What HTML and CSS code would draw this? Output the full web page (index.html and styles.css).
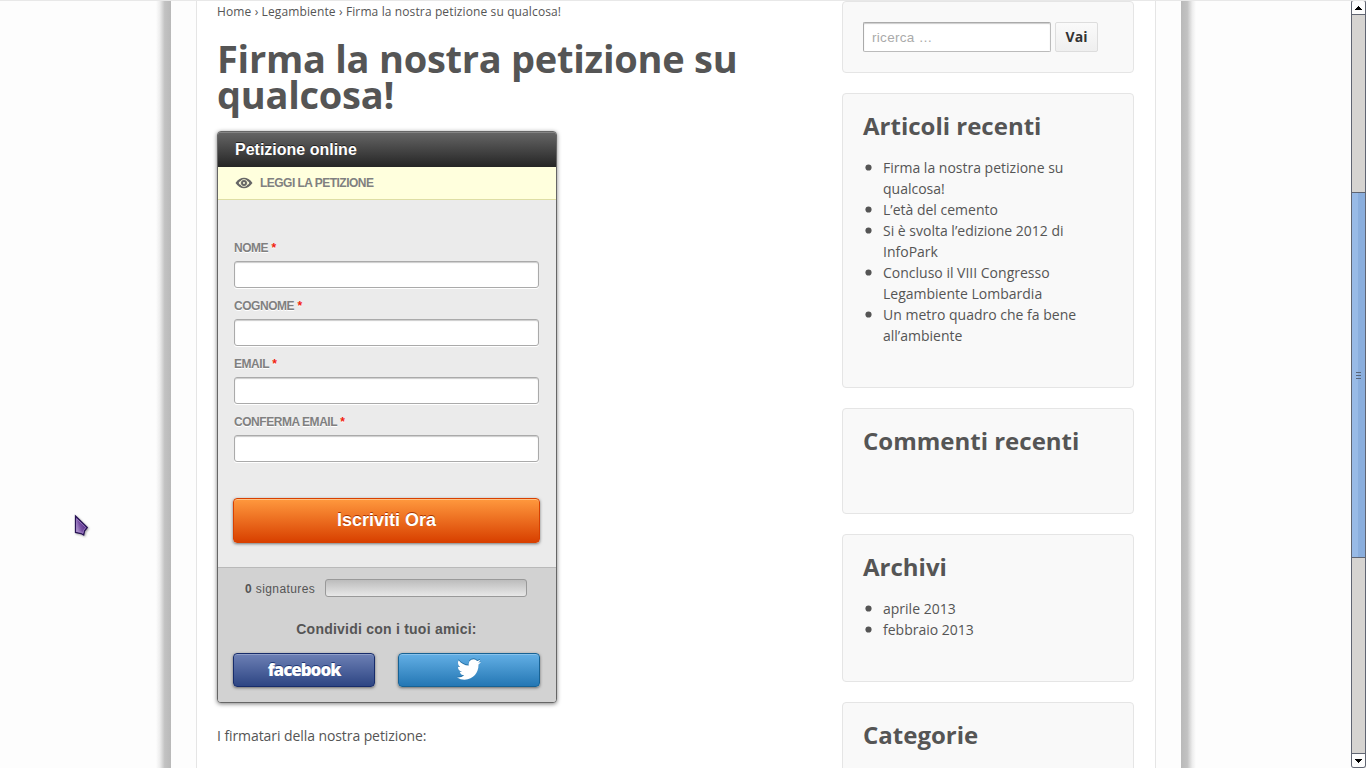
FILE: index.html
```
<!DOCTYPE html>
<html lang="it">
<head>
<meta charset="utf-8">
<title>Firma la nostra petizione su qualcosa!</title>
<link rel="stylesheet" href="styles.css">
</head>
<body>
<div class="viewport">
  <div class="shade shade-left"></div>
  <div class="page">
    <div class="wrapper">
      <main class="content">
        <nav class="breadcrumb">Home › Legambiente › Firma la nostra petizione su qualcosa!</nav>
        <h1 class="title">Firma la nostra petizione su<br>qualcosa!</h1>
        <section class="petition">
          <h2 class="petition-head">Petizione online</h2>
          <div class="read">
            <svg class="eye" viewBox="0 0 18 12"><path fill="#666" fill-rule="evenodd" d="M.5 6C3 2.300 6 .8 9 .8s6 1.500 8.500 5.200C15 9.700 12 11.200 9 11.200S3 9.700.5 6zM3.600 6c.6 1 1.200 1.700 2.100 2.300C5 7 5 5 5.700 3.700 4.800 4.300 4.200 5 3.600 6zM14.400 6c-.6-1-1.200-1.700-2.100-2.300.7 1.300.7 3.300 0 4.600.9-.6 1.500-1.300 2.100-2.300zM9 2.300a3.700 3.700 0 1 0 0 7.400 3.700 3.700 0 0 0 0-7.400z"/><circle cx="9" cy="6" r="2" fill="none" stroke="#666" stroke-width="2"/></svg>
            <span>LEGGI LA PETIZIONE</span>
          </div>
          <form class="form">
            <label class="label">NOME <b>*</b></label><input class="field">
            <label class="label">COGNOME <b>*</b></label><input class="field">
            <label class="label">EMAIL <b>*</b></label><input class="field">
            <label class="label">CONFERMA EMAIL <b>*</b></label><input class="field">
            <button class="submit" type="button"><span>Iscriviti Ora</span></button>
          </form>
          <div class="share">
            <div class="progress"><span class="count"><b>0</b> signatures</span><div class="bar"></div></div>
            <div class="share-title"><span>Condividi con i tuoi amici:</span></div>
            <div class="social">
              <a class="facebook"><span>facebook</span></a>
              <a class="twitter"><svg viewBox="0 0 24 20" preserveAspectRatio="none"><path fill="#fff" d="M23.953 2.570a10 10 0 01-2.825.775 4.958 4.958 0 002.163-2.723c-.951.555-2.005.959-3.127 1.184a4.920 4.920 0 00-8.384 4.482C7.690 6.095 4.067 4.130 1.640 1.162a4.822 4.822 0 00-.666 2.475c0 1.710.870 3.213 2.188 4.096a4.904 4.904 0 01-2.228-.616v.060a4.923 4.923 0 003.946 4.827 4.996 4.996 0 01-2.212.085 4.936 4.936 0 004.604 3.417 9.867 9.867 0 01-6.102 2.105c-.390 0-.779-.023-1.170-.067a13.995 13.995 0 007.557 2.209c9.053 0 13.998-7.496 13.998-13.985 0-.210 0-.420-.015-.630A9.935 9.935 0 0024 2.590z"/></svg></a>
            </div>
          </div>
        </section>
        <p class="signers">I firmatari della nostra petizione:</p>
      </main>
      <aside class="sidebar">
        <div class="widget search"><input class="query" placeholder="ricerca …"><button class="go" type="button">Vai</button></div>
        <div class="widget recent"><h3>Articoli recenti</h3>
          <ul><li>Firma la nostra petizione su<br>qualcosa!</li><li>L’età del cemento</li><li>Si è svolta l’edizione 2012 di<br>InfoPark</li><li>Concluso il VIII Congresso<br>Legambiente Lombardia</li><li>Un metro quadro che fa bene<br>all’ambiente</li></ul></div>
        <div class="widget comments"><h3>Commenti recenti</h3></div>
        <div class="widget archive"><h3>Archivi</h3><ul><li>aprile 2013</li><li>febbraio 2013</li></ul></div>
        <div class="widget categories"><h3>Categorie</h3></div>
      </aside>
    </div>
  </div>
  <div class="shade shade-right"></div>
  <div class="scrollbar">
    <div class="arrow arrow-up"><svg width="7" height="4" viewBox="0 0 7 4"><path d="M3 0h1v1h1v1h1v1h1v1H0V3h1V2h1V1h1z"/></svg></div>
    <div class="track-top"></div>
    <div class="thumb"><i></i><i></i><i></i></div>
    <div class="track-bottom"></div>
    <div class="arrow arrow-down"><svg width="7" height="4" viewBox="0 0 7 4"><path d="M0 0h7v1H6v1H5v1H4v1H3V3H2V2H1V1H0z"/></svg></div>
  </div>
  <svg class="cursor" viewBox="0 0 16 24"><defs><linearGradient id="violet" x1="0" y1="1" x2="1" y2=".4"><stop offset="0" stop-color="#cbbbe4"/><stop offset=".5" stop-color="#7951a5"/><stop offset="1" stop-color="#48237c"/></linearGradient></defs><path d="M1.500 2L13.300 13.500L10.500 17L9.700 21L7 19.500L1.500 18.500z" fill="url(#violet)" stroke="#281455" stroke-width="1.300"/><path d="M2.700 4.800L11.700 13.500L9.500 16.500L8.900 19.200L7.300 18.200L2.700 17.300z" fill="none" stroke="#a88bcb" stroke-width=".7"/></svg>
</div>
</body>
</html>
```
FILE: styles.css
```
* { box-sizing: border-box; }
html { overflow: hidden; }
body { margin: 0; color: #555; background: #fdfdfd; font: 14px/21px "Open Sans", sans-serif; }
h1, h2, h3, p, ul { margin: 0; padding: 0; }
.viewport { position: relative; display: flex; height: 768px; overflow: hidden; border-top: 1px solid #e8e8e8; }
.shade { flex: none; width: 15px; }
.shade-left { margin-left: 156px; background: linear-gradient(to right, #fdfdfd, #ededed 25%, #c2c2c2 58%, #b9b9b9); }
.shade-right { background: linear-gradient(to left, #fdfdfd, #ededed 25%, #c2c2c2 58%, #b9b9b9); }
.page { flex: none; width: 1010px; padding: 0 25px; background: #fdfdfd; }
.wrapper { display: flex; height: 767px; padding: 0 21px 0 20px; border: solid #e5e5e5; border-width: 0 1px; background: #fff; }
.content { width: 625px; flex: none; }
.breadcrumb { height: 21px; font-size: 12px; letter-spacing: .12px; white-space: nowrap; }
.title { margin: 18px 0 17px; height: 74px; font-size: 38px; line-height: 36px; letter-spacing: -.26px; white-space: nowrap; }
.petition { width: 340px; height: 572px; overflow: hidden; border: 1px solid #666; border-radius: 4px; background: #ebebeb; box-shadow: 0 1px 4px rgba(0,0,0,.5); font-family: "Liberation Sans", sans-serif; }
.petition-head { height: 35px; padding-left: 17px; color: #fff; font-size: 16px; line-height: 35px; background: linear-gradient(#666, #252525); box-shadow: inset 0 1px #858585; text-shadow: 0 -1px #222; }
.read { display: flex; align-items: center; gap: 7px; height: 33px; padding-left: 17px; border-bottom: 1px solid #dedea4; background: #ffd; color: #808080; font-size: 12px; font-weight: bold; letter-spacing: -.53px; white-space: nowrap; }
.eye { width: 18px; height: 12px; }
.form { display: flex; flex-direction: column; height: 367px; padding: 38px 16px 0 15px; }
.label { height: 21px; margin: 0 0 2px 1px; color: #808080; font-size: 12px; font-weight: bold; letter-spacing: -.46px; text-shadow: 0 1px #fff; white-space: nowrap; }
.label b { margin-left: .5px; color: #f0220c; }
.field { width: 305px; height: 27px; margin: 0 0 8px 1px; border: 1px solid #aaa; border-radius: 3px; background: #fff; box-shadow: inset 0 1px 1px #ccc, 0 1px #fff; }
.submit { height: 45px; margin-top: 28px; padding: 0 0 2px; border: 1px solid #d84000; border-radius: 4px; background: linear-gradient(#ff993e, #d84000); color: #fff; font: bold 18px/40px "Liberation Sans", sans-serif; text-shadow: 0 -1px #a83400; box-shadow: inset 0 1px #ffc184, 0 1px 3px rgba(0,0,0,.5); }
.share { height: 135px; padding: 11px 16px 0 15px; border-top: 1px solid #b9b9b9; background: #d2d2d2; }
.progress { display: flex; gap: 10px; height: 18px; padding-left: 12px; font-size: 12px; line-height: 20px; }
.count { width: 70px; letter-spacing: .4px; white-space: nowrap; }
.bar { width: 202px; height: 18px; border: 1px solid #999; border-radius: 3px; background: linear-gradient(#bcbcbc, #e8e8e8); }
.share-title { height: 20px; margin-top: 22px; text-align: center; font-size: 14px; line-height: 20px; font-weight: bold; letter-spacing: .23px; white-space: nowrap; }
.social { display: flex; justify-content: space-between; margin-top: 14px; }
.social a { display: flex; justify-content: center; align-items: center; width: 142px; height: 34px; border-radius: 4px; box-shadow: inset 0 1px rgba(255,255,255,.25), 0 1px 3px rgba(0,0,0,.5); }
.facebook { border: 1px solid #172c6b; background: linear-gradient(#6d80b5, #2d4583); color: #fff; font: 800 17px/30px "Open Sans", sans-serif; letter-spacing: -1.05px; text-shadow: 0 -1px #203775; }
.twitter { border: 1px solid #176294; background: linear-gradient(#63afe5, #2477b4); }
.twitter svg { width: 24px; height: 21px; margin-bottom: 1px; filter: drop-shadow(0 -1px 0 #2470a6); }
.signers { margin-top: 22px; letter-spacing: -.08px; }
.sidebar { width: 292px; flex: none; }
.widget { margin-bottom: 20px; padding: 20px; border: 1px solid #e5e5e5; border-radius: 4px; background: #f9f9f9; }
.widget h3 { height: 24px; font-size: 24px; line-height: 24px; white-space: nowrap; }
.widget ul { margin: 19px 0 0 20px; list-style: none; }
.widget li { position: relative; white-space: nowrap; }
.widget li::before { content: ""; position: absolute; left: -18px; top: 7px; width: 7px; height: 7px; border-radius: 50%; background: #555; transform: scale(.88); }
.search { display: flex; gap: 4px; height: 72px; }
.query { width: 188px; height: 30px; padding: 0 8px; border: 1px solid #aaa; border-right-color: #bbb; border-bottom-color: #bbb; border-radius: 2px; background: #fff; box-shadow: inset 0 1px 1px #ccc; font: 13.500px "Liberation Sans", sans-serif; letter-spacing: .3px; }
.query::placeholder { color: #aaa; opacity: 1; }
.go { width: 43px; height: 30px; padding: 0 0 2px; border: 1px solid #ddd; border-radius: 2px; background: linear-gradient(#fafafa, #efefef); color: #333; font: bold 14px "Open Sans", sans-serif; }
.recent { height: 295px; }
.comments { height: 106px; }
.archive { height: 148px; }
.categories { height: 106px; }
.scrollbar { display: flex; flex-direction: column; width: 15px; height: 768px; margin: -1px 0 0 155px; flex: none; border: 1px solid #606572; border-radius: 3px; border-top-color: #777; background: #d6d4d1; overflow: hidden; }
.arrow { display: flex; align-items: center; justify-content: center; height: 14px; flex: none; background: #fdfdfd; }
.arrow-up { border-bottom: 1px solid #606572; }
.arrow-down { border-top: 1px solid #606572; }
.track-top { height: 177px; flex: none; }
.thumb { display: flex; flex-direction: column; align-items: center; justify-content: center; gap: 2px; height: 366px; flex: none; border: solid #606572; border-width: 1px 0; background: linear-gradient(to right, #98bae6 50%, #8aaedd 50%); }
.thumb i { width: 5px; height: 1px; background: #596579; }
.track-bottom { flex: 1; }
.cursor { position: absolute; left: 74px; top: 513px; width: 16px; height: 24px; filter: drop-shadow(1px 1px 1px rgba(0,0,0,.35)); }
```
